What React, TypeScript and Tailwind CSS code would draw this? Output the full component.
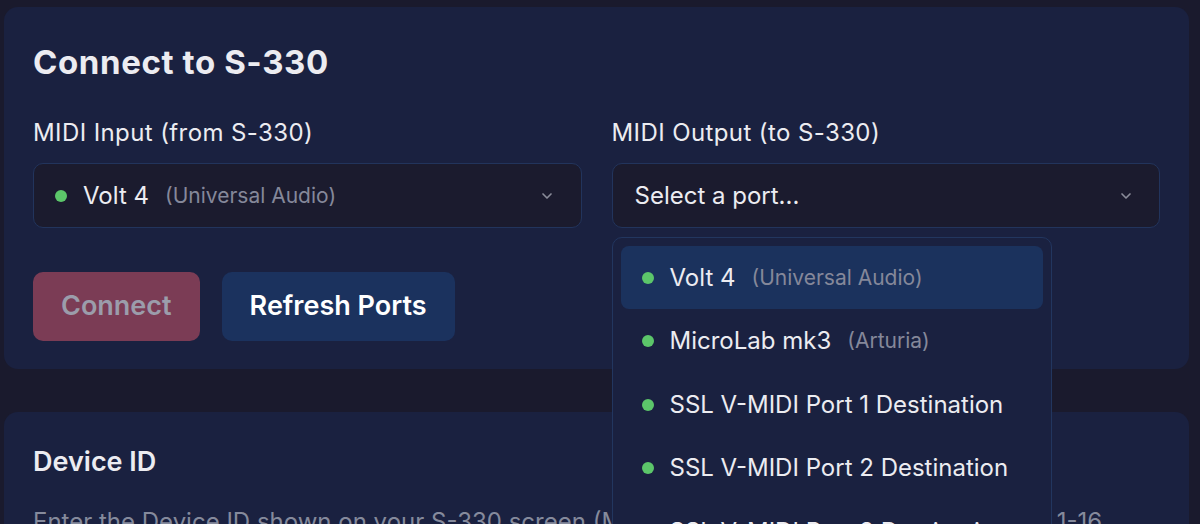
import { ChevronDown } from "lucide-react";

const ports = [
  { name: "Volt 4", maker: "Universal Audio" },
  { name: "MicroLab mk3", maker: "Arturia" },
  { name: "SSL V-MIDI Port 1 Destination" },
  { name: "SSL V-MIDI Port 2 Destination" },
  { name: "SSL V-MIDI Port 3 Destination" },
];

const Dot = () => <span className="w-3 h-3 rounded-full bg-[#5cc66a] shrink-0" />;

const App = () => {
  return (
    <div
      className="h-[524px] overflow-hidden bg-[#1a1a2d] pt-[7px] pl-[4px] pr-[11px] text-[#ececf1]"
      style={{ fontFamily: "Inter, 'Noto Sans', sans-serif" }}
    >
      {/* Connection card */}
      <section className="rounded-[14px] bg-[#1a2140] px-[29px] pt-[35px] pb-[28px]">
        <h1 className="text-[33px] leading-[40px] font-bold tracking-[0.6px]">Connect to S-330</h1>

        <div className="mt-[35px] grid grid-cols-2 gap-[30px]">
          <div>
            <label className="block text-[24px] leading-[32px] tracking-[0.4px]">MIDI Input (from S-330)</label>
            <div className="mt-[14px] h-[65px] flex items-center rounded-[10px] border border-[#22345c] bg-[#1b1b2e] pl-[21px] pr-[26px]">
              <Dot />
              <span className="ml-[16px] text-[24px]">Volt 4</span>
              <span className="ml-[16px] text-[21px] text-[#85889a]">(Universal Audio)</span>
              <ChevronDown className="ml-auto h-[16px] w-[16px] text-[#8a8c99]" strokeWidth={2.5} />
            </div>
          </div>

          <div className="relative">
            <label className="block text-[24px] leading-[32px] tracking-[0.4px]">MIDI Output (to S-330)</label>
            <div className="mt-[14px] h-[65px] flex items-center rounded-[10px] border border-[#22345c] bg-[#1b1b2e] pl-[22px] pr-[25px]">
              <span className="text-[24px]">Select a port...</span>
              <ChevronDown className="ml-auto h-[16px] w-[16px] text-[#8a8c99]" strokeWidth={2.5} />
            </div>

            {/* Open dropdown list */}
            <ul className="absolute z-10 left-0 top-[120px] w-[440px] rounded-[10px] border border-[#22365f] bg-[#1a2140] p-[8px] space-y-[0.5px]">
              {ports.map((p, i) => (
                <li
                  key={p.name}
                  className={`h-[63px] flex items-center rounded-[8px] pl-[21px] ${i === 0 ? "bg-[#1b325d]" : ""}`}
                >
                  <Dot />
                  <span className="ml-[16px] text-[24px]">{p.name}</span>
                  {p.maker && <span className="ml-[16px] text-[21px] text-[#85889a]">({p.maker})</span>}
                </li>
              ))}
            </ul>
          </div>
        </div>

        <div className="mt-[44px] flex gap-[22px]">
          <button className="h-[69px] px-[28px] rounded-[10px] bg-[#7b3c55] text-[27px] font-semibold text-[#9b9dab]">
            Connect
          </button>
          <button className="h-[69px] px-[28px] rounded-[10px] bg-[#1b325e] text-[27px] font-semibold text-white">
            Refresh Ports
          </button>
        </div>
      </section>

      {/* Device ID card */}
      <section className="mt-[43px] rounded-[14px] bg-[#1a2140] px-[29px] pt-[32px] pb-[28px]">
        <h2 className="text-[27px] leading-[36px] font-semibold">Device ID</h2>
        <p className="mt-[26px] text-[24px] leading-[32px] text-[#858a9c] whitespace-nowrap">
          Enter the Device ID shown on your S-330 screen (MIDI menu → Device ID). Valid range is: 1-16
        </p>
      </section>
    </div>
  );
};

export default App;
